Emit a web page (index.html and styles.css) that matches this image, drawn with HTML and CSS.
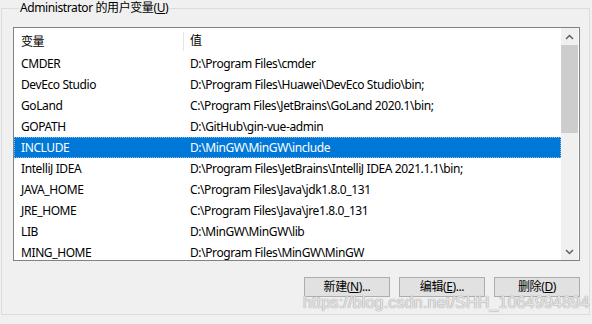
FILE: index.html
```html
<!DOCTYPE html>
<html lang="zh-CN">

<head>
    <meta charset="UTF-8">
    <title>用户变量</title>
    <link rel="stylesheet" href="styles.css">
</head>

<body>
    <fieldset class="group">
        <legend>Administrator 的用户变量(<u>U</u>)</legend>
        <div class="listbox">
            <div class="table">
                <div class="head">
                    <div class="col1">变量</div>
                    <div class="col2">值</div>
                </div>
                <div class="rows">
                    <div class="row"><div class="col1">CMDER</div><div class="col2">D:\Program Files\cmder</div></div>
                    <div class="row"><div class="col1">DevEco Studio</div><div class="col2">D:\Program Files\Huawei\DevEco Studio\bin;</div></div>
                    <div class="row"><div class="col1">GoLand</div><div class="col2">C:\Program Files\JetBrains\GoLand 2020.1\bin;</div></div>
                    <div class="row"><div class="col1">GOPATH</div><div class="col2">D:\GitHub\gin-vue-admin</div></div>
                    <div class="row selected"><div class="col1">INCLUDE</div><div class="col2">D:\MinGW\MinGW\include</div></div>
                    <div class="row"><div class="col1">IntelliJ IDEA</div><div class="col2">D:\Program Files\JetBrains\IntelliJ IDEA 2021.1.1\bin;</div></div>
                    <div class="row"><div class="col1">JAVA_HOME</div><div class="col2">C:\Program Files\Java\jdk1.8.0_131</div></div>
                    <div class="row"><div class="col1">JRE_HOME</div><div class="col2">C:\Program Files\Java\jre1.8.0_131</div></div>
                    <div class="row"><div class="col1">LIB</div><div class="col2">D:\MinGW\MinGW\lib</div></div>
                    <div class="row"><div class="col1">MING_HOME</div><div class="col2">D:\Program Files\MinGW\MinGW</div></div>
                </div>
            </div>
            <div class="scrollbar">
                <div class="arrow">
                    <svg width="9" height="6" viewBox="0 0 9 6"><path d="M1 5 L4.5 1.5 L8 5" fill="none" stroke="#606060" stroke-width="1.5"/></svg>
                </div>
                <div class="thumb"></div>
                <div class="track"></div>
                <div class="arrow">
                    <svg width="9" height="6" viewBox="0 0 9 6"><path d="M1 1 L4.5 4.5 L8 1" fill="none" stroke="#606060" stroke-width="1.5"/></svg>
                </div>
            </div>
        </div>
        <div class="buttons">
            <button class="btn">新建(<u>N</u>)...</button>
            <button class="btn">编辑(<u>E</u>)...</button>
            <button class="btn">删除(<u>D</u>)</button>
        </div>
    </fieldset>
    <div class="watermark">https://blog.csdn.net/SHH_1064994894</div>
</body>

</html>
```

FILE: styles.css
```css
body {
    margin: 0;
    width: 592px;
    height: 324px;
    background: #F0F0F0;
    font-size: 12px;
    font-family: "Noto Sans", "Noto Sans CJK SC", sans-serif;
    letter-spacing: -0.4px;
    color: #000;
    position: relative;
    overflow: hidden;
}

.group {
    margin: 0 0 0 1px;
    width: 589px;
    height: 315px;
    box-sizing: border-box;
    border: 1px solid #DCDCDC;
    padding: 11px 9px 0 11px;
}

.group legend {
    margin-left: 6px;
    padding: 0 1px;
    line-height: 16px;
}

.listbox {
    display: flex;
    width: 567px;
    height: 234px;
    box-sizing: border-box;
    border: 1px solid #828282;
    background: white;
    overflow: hidden;
}

.table {
    flex: 1;
    overflow: hidden;
}

.head {
    display: flex;
    height: 25px;
    align-items: center;
}

.head .col1 {
    border-right: 1px solid #E5E5E5;
    height: 19px;
    line-height: 19px;
    margin-top: 1px;
}

.head .col2 {
    line-height: 19px;
}

.col1 {
    width: 162px;
    padding-left: 7px;
    flex-shrink: 0;
}

.col2 {
    padding-left: 6px;
    white-space: nowrap;
}

.row {
    display: flex;
    height: 21px;
    line-height: 21px;
    box-sizing: border-box;
}

.row .col1 {
    width: 162px;
    padding-right: 1px;
}

.selected {
    background: #0078D7;
    color: white;
    border: 1px dotted #8FB9E3;
    line-height: 19px;
}

.selected .col1 {
    padding-left: 6px;
}

.scrollbar {
    width: 17px;
    display: flex;
    flex-direction: column;
    background: #F0F0F0;
    margin-right: 1px;
}

.arrow {
    height: 17px;
    display: flex;
    align-items: center;
    justify-content: center;
}

.thumb {
    height: 88px;
    background: #CDCDCD;
}

.track {
    flex: 1;
}

.buttons {
    display: flex;
    justify-content: flex-end;
    gap: 9px;
    margin-top: 16px;
}

.btn {
    width: 86px;
    height: 20px;
    padding: 0;
    font: inherit;
    letter-spacing: inherit;
    color: #000;
    background: #E1E1E1;
    border: 1px solid #ADADAD;
    line-height: 16px;
}

.watermark {
    position: absolute;
    left: 303px;
    top: 294px;
    font-size: 16px;
    font-family: "Liberation Sans", sans-serif;
    letter-spacing: 0.2px;
    color: rgba(255, 255, 255, 0.75);
    text-shadow: 0 0 1px #999, 0 0 1px #999;
    white-space: nowrap;
}
```
